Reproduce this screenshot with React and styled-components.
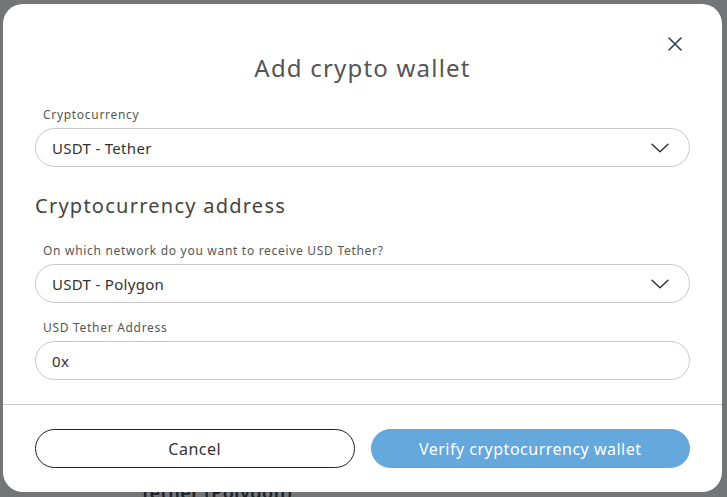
import React from 'react'
import styled, { createGlobalStyle } from 'styled-components'

const GlobalStyle = createGlobalStyle`
  html, body {
    margin: 0;
    padding: 0;
    height: 100%;
  }
  body {
    font-family: "Noto Sans", "Open Sans", sans-serif;
    background: #f4f5f7;
    overflow: hidden;
  }
`

const Page = styled.div`
  position: relative;
  width: 727px;
  height: 497px;
  overflow: hidden;
  background: #f4f5f7;
`

const BehindText = styled.div`
  padding: 480px 0 0 140px;
  font-size: 18px;
  font-weight: 600;
  letter-spacing: 0.5px;
  color: #1f2a37;
`

const Backdrop = styled.div`
  position: absolute;
  inset: 0;
  background: rgba(24, 24, 24, 0.58);
  display: flex;
  align-items: flex-start;
  padding: 4px 5px 0 3px;
`

const Modal = styled.div`
  position: relative;
  width: 719px;
  height: 488px;
  background: #fff;
  border-radius: 20px;
  display: flex;
  flex-direction: column;
  overflow: hidden;
`

const Body = styled.div`
  padding: 48px 32px 24px 32px;
  display: flex;
  flex-direction: column;
`

const CloseButton = styled.button`
  position: absolute;
  top: 29px;
  right: 36px;
  width: 22px;
  height: 22px;
  padding: 0;
  border: 0;
  background: none;
  display: flex;
  align-items: center;
  justify-content: center;
  cursor: pointer;
`

const Title = styled.h2`
  margin: 0 0 23px;
  font-size: 24px;
  line-height: 32px;
  font-weight: 400;
  letter-spacing: 1.2px;
  text-align: center;
  color: #555;
`

const SectionTitle = styled.h3`
  margin: ${p => p.$top}px 0 24px;
  font-size: 20px;
  line-height: 26px;
  font-weight: 400;
  letter-spacing: 1.25px;
  color: #444;
`

const Field = styled.div`
  display: flex;
  flex-direction: column;
  margin-top: ${p => p.$top || 0}px;
`

const Label = styled.label`
  padding-left: 8px;
  margin-bottom: 5px;
  font-size: 12px;
  line-height: 16px;
  letter-spacing: 0.7px;
  color: #555;
`

const Pill = styled.div`
  box-sizing: border-box;
  height: 39px;
  border: 1px solid #c8c8c8;
  border-radius: 20px;
  padding: 0 20px 0 16px;
  display: flex;
  align-items: center;
  justify-content: space-between;
  font-size: 15px;
  letter-spacing: 0.3px;
  color: #333;
`

const Footer = styled.div`
  border-top: 1px solid #c8c8c8;
  padding: 24px 32px;
  display: flex;
  gap: 16px;
`

const Button = styled.button`
  flex: 1;
  box-sizing: border-box;
  height: 39px;
  border-radius: 20px;
  font-family: "Noto Sans", sans-serif;
  font-size: 16px;
  letter-spacing: 0.5px;
  cursor: pointer;
  border: 1px solid ${p => (p.$primary ? '#64a8dc' : '#222')};
  background: ${p => (p.$primary ? '#64a8dc' : '#fff')};
  color: ${p => (p.$primary ? '#fff' : '#333')};
`

const Chevron = () => (
  <svg width="18" height="10" viewBox="0 0 18 10" fill="none">
    <path d="M1 1.2l8 7.6 8-7.6" stroke="#333" strokeWidth="1.5" strokeLinecap="round" strokeLinejoin="round" />
  </svg>
)

const CloseIcon = () => (
  <svg width="14" height="14" viewBox="0 0 14 14" fill="none">
    <path d="M1 1l12 12M13 1L1 13" stroke="#2b3f5c" strokeWidth="1.6" strokeLinecap="round" />
  </svg>
)

const Select = ({ value }) => (
  <Pill>
    <span>{value}</span>
    <Chevron />
  </Pill>
)

export default function App() {
  return (
    <Page>
      <GlobalStyle />
      <BehindText>Tether (Polygon)</BehindText>
      <Backdrop>
        <Modal>
          <CloseButton aria-label="Close">
            <CloseIcon />
          </CloseButton>
          <Body>
            <Title>Add crypto wallet</Title>
            <Field>
              <Label>Cryptocurrency</Label>
              <Select value="USDT - Tether" />
            </Field>
            <SectionTitle $top={26}>Cryptocurrency address</SectionTitle>
            <Field>
              <Label>On which network do you want to receive USD Tether?</Label>
              <Select value="USDT - Polygon" />
            </Field>
            <Field $top={17}>
              <Label>USD Tether Address</Label>
              <Pill>0x</Pill>
            </Field>
          </Body>
          <Footer>
            <Button>Cancel</Button>
            <Button $primary>Verify cryptocurrency wallet</Button>
          </Footer>
        </Modal>
      </Backdrop>
    </Page>
  )
}
